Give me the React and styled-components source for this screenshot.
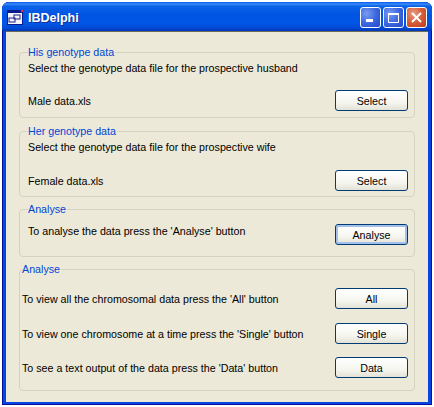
import React from "react";
import styled, { createGlobalStyle } from "styled-components";

const Global = createGlobalStyle`
  html, body { margin: 0; padding: 0; background: #fff; }
  body { font-family: "Liberation Sans", Arial, sans-serif; font-size: 10.7px; color: #000; }
`;
const Page = styled.div`
  width: 434px; height: 407px; padding: 2px; box-sizing: border-box; overflow: hidden;
`;
const Win = styled.div`
  width: 430px; height: 403px; display: flex; flex-direction: column; box-sizing: border-box;
  background: #0a44e0; border-radius: 7px 7px 0 0; overflow: hidden;
  box-shadow: inset 0 0 0 1px #00139c;
`;
const TitleBar = styled.div`
  height: 29px; flex: none; display: flex; align-items: center; padding: 2px 5px 0 5px; box-sizing: border-box;
  background: linear-gradient(180deg, #0058ee 0%, #3c8cf6 7%, #0a62e8 14%, #0054e3 45%, #0056e6 75%, #0048d2 90%, #0038b8 100%);
`;
const AppIcon = styled.svg`
  width: 16px; height: 16px; flex: none; margin-right: 5px;
`;
const Title = styled.div`
  flex: 1; color: #fff; font-family: "Liberation Sans", sans-serif; font-weight: 700; font-size: 12.5px;
  text-shadow: 1px 1px 0 #0f2f9a;
`;
const Caps = styled.div`
  display: flex; gap: 2px;
`;
const Cap = styled.div`
  width: 21px; height: 21px; box-sizing: border-box; border: 1px solid #fff; border-radius: 3px;
  display: flex; align-items: center; justify-content: center;
  background: ${p => p.$close
    ? "radial-gradient(circle at 35% 30%, #e8a08a 0%, #d9603a 45%, #bb3d18 100%)"
    : "radial-gradient(circle at 30% 30%, #7a9cf0 0%, #3c68e0 50%, #2148c8 100%)"};
`;
const Client = styled.div`
  flex: 1; margin: 0 4px 3px 4px; background: #ece9d8; border-top: 1px solid #6b6b5a;
  padding: 13px 13px 0 13px; display: flex; flex-direction: column; min-height: 0;
`;
const Group = styled.fieldset`
  margin: 0 0 ${p => p.$gap}px 0; padding: 0; height: ${p => p.$h}px; box-sizing: border-box; flex: none;
  border: 1px solid #d4d2c1; border-radius: 4px; min-width: 0;
  display: flex; flex-direction: column;
`;
const Legend = styled.legend`
  margin-left: ${p => p.$left}px; padding: 0 1px 0 0; color: #0046d5; line-height: 14px;
`;
const Line = styled.div`
  padding-left: ${p => p.$left}px; margin-top: 2px; line-height: 14px; white-space: nowrap;
`;
const Row = styled.div`
  display: flex; align-items: center; justify-content: space-between;
  padding: 0 6px 0 ${p => p.$left}px; height: 23px; margin-top: ${p => p.$top}px;
`;
const Label = styled.span`
  white-space: nowrap; padding-bottom: ${p => p.$raise || 0}px; padding-top: ${p => p.$drop || 0}px;
`;
const Btn = styled.button`
  width: 73px; height: 21px; padding: 0; box-sizing: border-box; font: inherit; color: #000;
  border: 1px solid #003c74; border-radius: 3px;
  background: linear-gradient(180deg, #fff 0%, #f6f6f0 60%, #e4e2d6 100%);
  ${p => p.$focus && `box-shadow: inset 0 0 0 2px #a4bfe9;`}
`;

export default function App() {
  return (
    <Page>
      <Global />
      <Win>
        <TitleBar>
          <AppIcon viewBox="0 0 16 16">
            <rect width="16" height="15" fill="#0a1a8c" />
            <rect x="1" y="3" width="14" height="11" fill="#f4f4fa" />
            <rect x="2" y="8" width="6" height="4" fill="none" stroke="#20208c" />
            <rect x="7" y="5" width="6" height="4" fill="none" stroke="#20208c" />
            <rect x="14" y="0" width="2" height="2" fill="#e03060" />
          </AppIcon>
          <Title>IBDelphi</Title>
          <Caps>
            <Cap>
              <svg width="13" height="13" viewBox="0 0 13 13"><rect x="2" y="8" width="7" height="3" fill="#fff" /></svg>
            </Cap>
            <Cap>
              <svg width="13" height="13" viewBox="0 0 13 13"><path d="M1.5 2.5h10v9h-10z" fill="none" stroke="#fff" strokeWidth="1" /><rect x="1" y="2" width="11" height="2" fill="#fff" /></svg>
            </Cap>
            <Cap $close>
              <svg width="13" height="13" viewBox="0 0 13 13"><path d="M2 2l9 9M11 2l-9 9" stroke="#fff" strokeWidth="2" /></svg>
            </Cap>
          </Caps>
        </TitleBar>
        <Client>
          <Group $h={73} $gap={6}>
            <Legend $left={8}>His genotype data</Legend>
            <Line $left={8}>Select the genotype data file for the prospective husband</Line>
            <Row $left={8} $top={14}>
              <Label>Male data.xls</Label><Btn>Select</Btn>
            </Row>
          </Group>
          <Group $h={73} $gap={5}>
            <Legend $left={8}>Her genotype data</Legend>
            <Line $left={8}>Select the genotype data file for the prospective wife</Line>
            <Row $left={8} $top={15}>
              <Label>Female data.xls</Label><Btn>Select</Btn>
            </Row>
          </Group>
          <Group $h={55} $gap={5}>
            <Legend $left={8}>Analyse</Legend>
            <Row $left={8} $top={7}>
              <Label $raise={8}>To analyse the data press the 'Analyse' button</Label><Btn $focus>Analyse</Btn>
            </Row>
          </Group>
          <Group $h={129} $gap={0}>
            <Legend $left={2}>Analyse</Legend>
            <Row $left={2} $top={11}>
              <Label $drop={1}>To view all the chromosomal data press the 'All' button</Label><Btn>All</Btn>
            </Row>
            <Row $left={2} $top={12}>
              <Label $drop={1}>To view one chromosome at a time press the 'Single' button</Label><Btn>Single</Btn>
            </Row>
            <Row $left={2} $top={11}>
              <Label $drop={1}>To see a text output of the data press the 'Data' button</Label><Btn>Data</Btn>
            </Row>
          </Group>
        </Client>
      </Win>
    </Page>
  );
}
